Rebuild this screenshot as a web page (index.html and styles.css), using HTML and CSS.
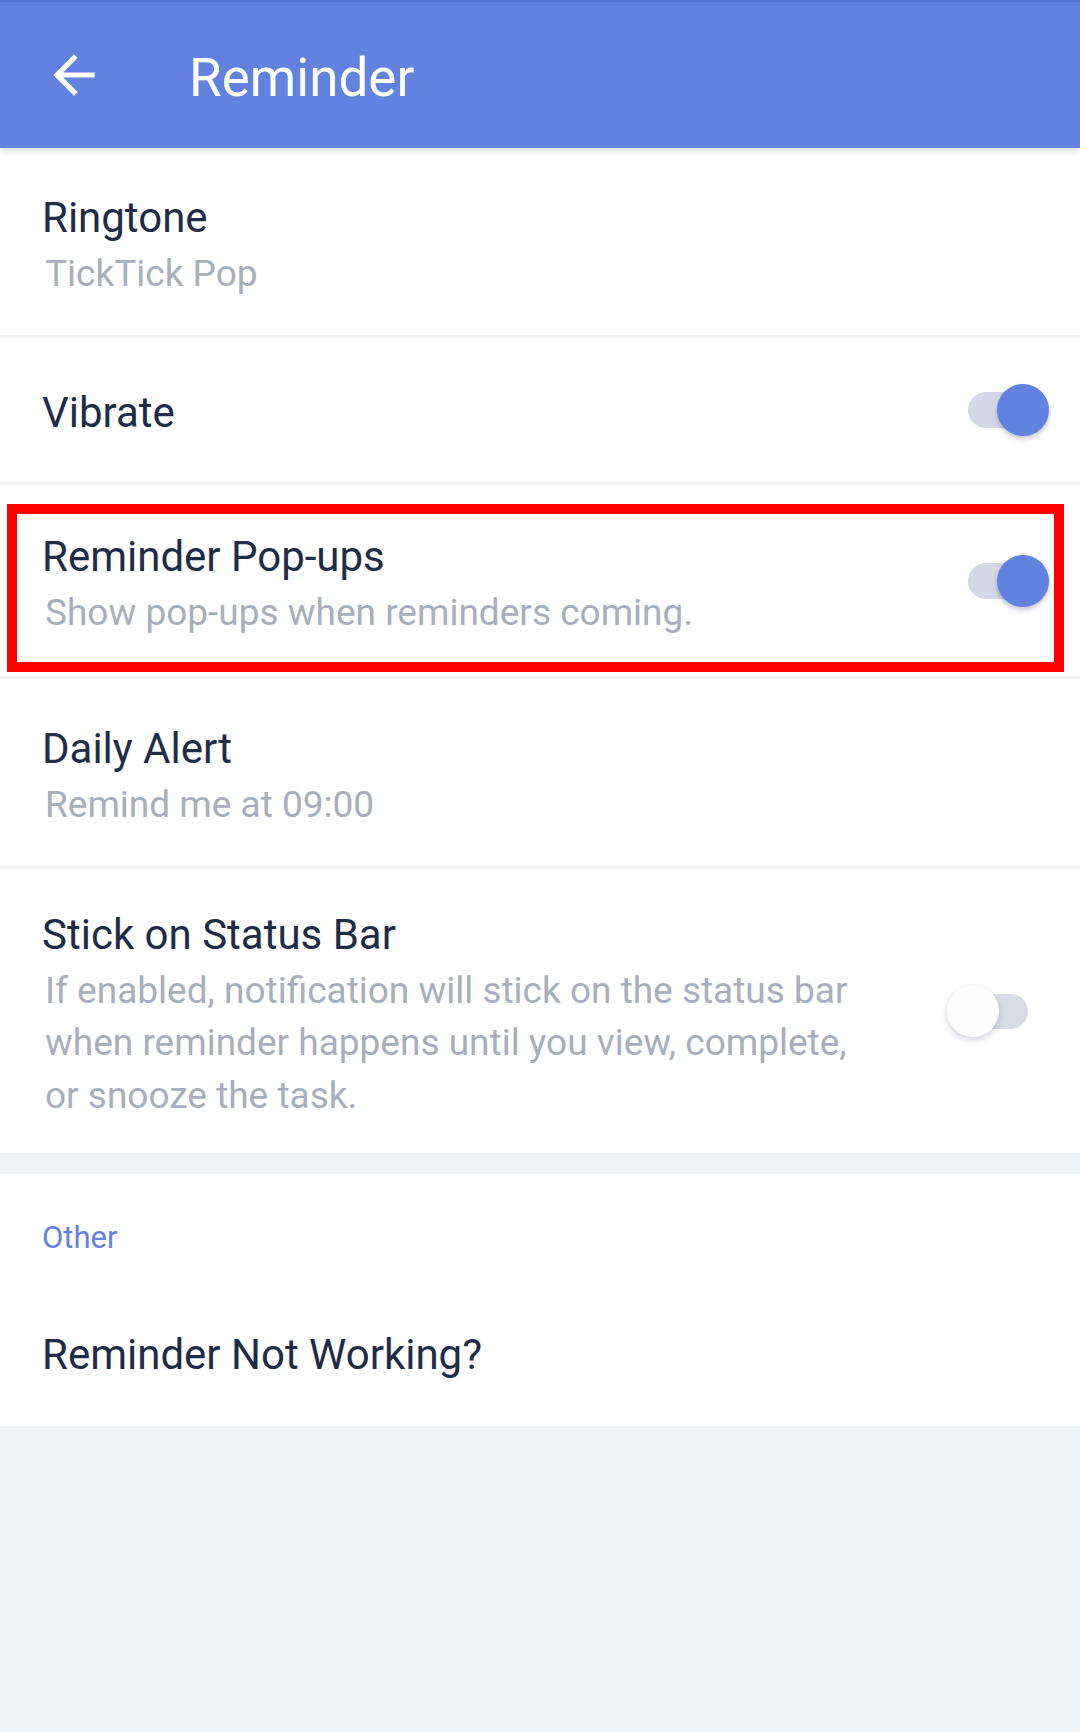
FILE: index.html
```html
<!DOCTYPE html>
<html lang="en">
<head>
<meta charset="utf-8">
<title>Reminder</title>
<link rel="stylesheet" href="styles.css">
</head>
<body>
<header class="toolbar">
  <span class="back" aria-label="Back">
    <svg viewBox="0 0 24 24" width="62" height="62"><path d="M20 11H7.83l5.59-5.59L12 4l-8 8 8 8 1.41-1.41L7.83 13H20v-2z" fill="#ffffff"/></svg>
  </span>
  <h1 class="toolbar-title">Reminder</h1>
</header>

<main class="list">
  <div class="row row--two row--divided">
    <div class="row-text">
      <div class="row-title">Ringtone</div>
      <div class="row-sub">TickTick Pop</div>
    </div>
  </div>

  <div class="row row--single row--divided">
    <div class="row-text">
      <div class="row-title">Vibrate</div>
    </div>
    <span class="switch switch--on"><span class="switch-track"></span><span class="switch-knob"></span></span>
  </div>

  <div class="row row--highlight row--divided">
    <div class="row-text">
      <div class="row-title">Reminder Pop-ups</div>
      <div class="row-sub">Show pop-ups when reminders coming.</div>
    </div>
    <span class="switch switch--on"><span class="switch-track"></span><span class="switch-knob"></span></span>
    <div class="highlight-box"></div>
  </div>

  <div class="row row--two row--divided">
    <div class="row-text">
      <div class="row-title">Daily Alert</div>
      <div class="row-sub">Remind me at 09:00</div>
    </div>
  </div>

  <div class="row row--multi">
    <div class="row-text">
      <div class="row-title">Stick on Status Bar</div>
      <div class="row-sub">If enabled, notification will stick on the status bar when reminder happens until you view, complete, or snooze the task.</div>
    </div>
    <span class="switch switch--off"><span class="switch-track"></span><span class="switch-knob"></span></span>
  </div>

  <section class="section">
    <div class="section-title">Other</div>
    <div class="row row--link">
      <div class="row-text">
        <div class="row-title">Reminder Not Working?</div>
      </div>
    </div>
  </section>
</main>
</body>
</html>
```
FILE: styles.css
```css
* {
  box-sizing: border-box;
}

html, body {
  margin: 0;
  padding: 0;
}

body {
  width: 1080px;
  min-height: 1732px;
  background: #f0f1f3;
  font-family: Roboto, "Noto Sans", "Liberation Sans", sans-serif;
}

.toolbar {
  position: relative;
  z-index: 2;
  height: 148px;
  display: flex;
  align-items: center;
  background: #6381df;
  border-top: 2px solid #5672cf;
  box-shadow: 0 3px 7px rgba(40, 50, 90, 0.18);
}

.back {
  display: flex;
  width: 62px;
  height: 62px;
  margin-left: 43px;
}

.toolbar-title {
  margin: 0 0 0 84px;
  padding-top: 6px;
  font-size: 53px;
  line-height: 64px;
  font-weight: 400;
  color: #ffffff;
}

.list {
  display: flex;
  flex-direction: column;
}

.row {
  position: relative;
  display: flex;
  align-items: center;
  padding: 0 31px 0 42px;
  background: #ffffff;
}

.row--divided {
  border-bottom: 3px solid #f1f2f4;
}

.row--two {
  min-height: 190px;
}

.row--single {
  min-height: 147px;
}

.row--highlight {
  min-height: 194px;
}

.row--multi {
  min-height: 284px;
}

.row--link {
  min-height: 143px;
}

.row-text {
  flex: 1;
  max-width: 825px;
  padding-top: 10px;
}

.row--single .row-text {
  padding-top: 5px;
}

.row--link .row-text {
  padding-top: 0;
}

.row-title {
  font-size: 42px;
  line-height: 50px;
  color: #1e2c47;
}

.row-sub {
  margin-top: 5px;
  margin-left: 3px;
  font-size: 37px;
  line-height: 52.5px;
  color: #a8afba;
}

.switch {
  position: relative;
  flex: none;
  width: 81px;
  height: 52px;
  margin-left: auto;
}

.switch-track {
  position: absolute;
  top: 8px;
  width: 76px;
  height: 36px;
  border-radius: 18px;
  background: #d3d8e6;
}

.switch-knob {
  position: absolute;
  top: 0;
  width: 52px;
  height: 52px;
  border-radius: 50%;
}

.switch--on .switch-track {
  left: 0;
}

.switch--on .switch-knob {
  right: 0;
  background: #6381de;
  box-shadow: 0 3px 5px rgba(40, 50, 90, 0.28);
}

.switch--off {
  margin-right: 21px;
}

.switch--off .switch-track {
  right: 0;
  top: 9px;
  height: 35px;
  background: #d9dce7;
}

.switch--off .switch-knob {
  left: 0;
  background: #fdfdfd;
  box-shadow: 0 3px 6px rgba(40, 50, 90, 0.22);
}

.highlight-box {
  position: absolute;
  left: 7px;
  right: 16px;
  top: 19px;
  bottom: 4px;
  border: 10.5px solid #ff0000;
  pointer-events: none;
}

.section {
  margin-top: 21px;
  background: #ffffff;
}

.section-title {
  padding: 44px 0 25px 42px;
  font-size: 31px;
  line-height: 40px;
  color: #6381de;
}
```
